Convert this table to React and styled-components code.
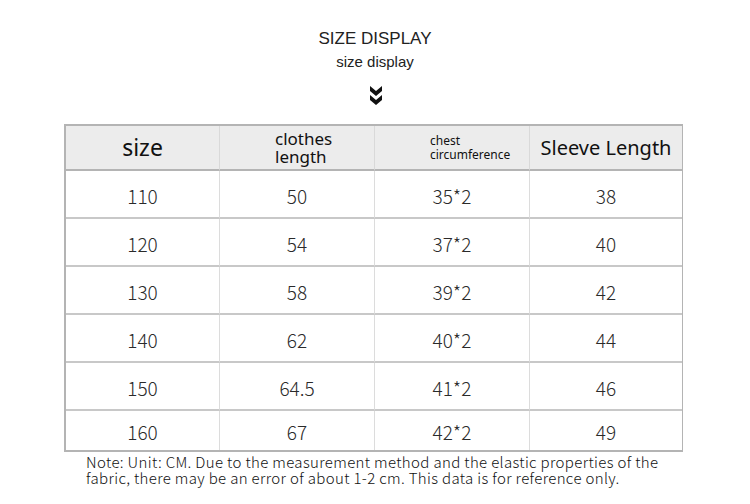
import React from 'react';
import styled, { createGlobalStyle } from 'styled-components';

const GlobalStyle = createGlobalStyle`
  html, body {
    margin: 0;
    padding: 0;
    background: #ffffff;
  }
`;

const Page = styled.div`
  width: 750px;
  height: 504px;
  background: #fff;
  display: flex;
  flex-direction: column;
  align-items: center;
  padding-top: 29px;
  box-sizing: border-box;
  color: #222;
`;

const Title = styled.div`
  font-family: "Liberation Sans", Arial, sans-serif;
  font-size: 17px;
  line-height: 20px;
  color: #222;
`;

const Subtitle = styled.div`
  font-family: "Liberation Sans", Arial, sans-serif;
  font-size: 15px;
  line-height: 18px;
  margin-top: 4px;
  color: #222;
`;

const Chevrons = styled.svg`
  display: block;
  margin-top: 14px;
  margin-left: 1px;
`;

const Table = styled.div`
  margin-top: 17px;
  margin-left: -3px;
  border: 2px solid #b4b4b4;
  border-right-width: 1px;
  display: grid;
  grid-template-columns: 153px 155px 155px 153px;
  grid-template-rows: 45px repeat(5, 48px) 39px;
`;

const HeadCell = styled.div`
  background: #ececec;
  display: flex;
  align-items: center;
  justify-content: ${(p) => (p.left ? 'flex-start' : 'center')};
  padding-left: ${(p) => p.pad || 0}px;
  font-family: "Noto Sans", "DejaVu Sans", sans-serif;
  font-size: ${(p) => p.size}px;
  line-height: ${(p) => p.lh || p.size + 2}px;
  color: #111;
  border-left: ${(p) => (p.first ? 'none' : '1px solid #d9d9d9')};
  border-bottom: 2px solid #b4b4b4;
  box-sizing: border-box;
`;

const Cell = styled.div`
  display: flex;
  align-items: center;
  justify-content: center;
  font-family: "Noto Sans CJK SC", "Noto Sans", sans-serif;
  font-weight: 300;
  font-size: 19px;
  color: #2a2a2a;
  border-left: ${(p) => (p.first ? 'none' : '1px solid #dcdcdc')};
  border-bottom: ${(p) => (p.last ? 'none' : '2px solid #c8c8c8')};
  box-sizing: border-box;
  padding-top: 2px;
`;

const Note = styled.div`
  width: 582px;
  margin-top: 2px;
  margin-left: 4px;
  font-family: "Noto Sans CJK SC", "Noto Sans", sans-serif;
  font-weight: 300;
  font-size: 15px;
  letter-spacing: 0.35px;
  line-height: 16px;
  color: #111;
`;

const rows = [
  ['110', '50', '35*2', '38'],
  ['120', '54', '37*2', '40'],
  ['130', '58', '39*2', '42'],
  ['140', '62', '40*2', '44'],
  ['150', '64.5', '41*2', '46'],
  ['160', '67', '42*2', '49'],
];

function App() {
  return (
    <Page>
      <GlobalStyle />
      <Title>SIZE DISPLAY</Title>
      <Subtitle>size display</Subtitle>
      <Chevrons width="14" height="22" viewBox="0 0 14 22">
        <path d="M1 1 L7 6 L13 1 L13 6 L7 11 L1 6 Z" fill="#111" />
        <path d="M1 10 L7 15 L13 10 L13 15 L7 20 L1 15 Z" fill="#111" />
      </Chevrons>
      <Table>
        <HeadCell first size={23}>size</HeadCell>
        <HeadCell left pad={55} size={17} lh={18}>clothes<br />length</HeadCell>
        <HeadCell left pad={55} size={12} lh={14}>chest<br />circumference</HeadCell>
        <HeadCell size={20}>Sleeve Length</HeadCell>
        {rows.map((r, i) => r.map((v, j) => (
          <Cell key={`${i}-${j}`} first={j === 0} last={i === rows.length - 1}>{v}</Cell>
        )))}
      </Table>
      <Note>
        Note: Unit: CM. Due to the measurement method and the elastic properties of the fabric, there may be an error of about 1-2 cm. This data is for reference only.
      </Note>
    </Page>
  );
}

export default App;
